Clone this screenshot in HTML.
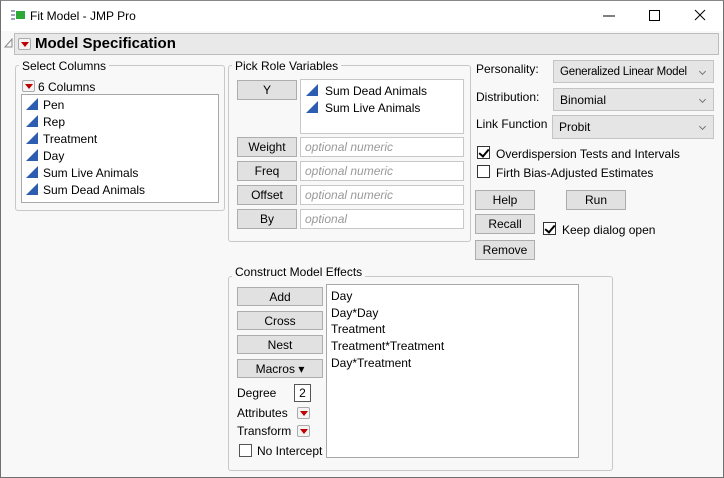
<!DOCTYPE html>
<html><head><style>
*{box-sizing:border-box;margin:0;padding:0}
body{width:724px;height:478px;overflow:hidden;background:#f8f8f8;font-family:"Liberation Sans",sans-serif;font-size:12px;color:#000;position:relative}
.a{position:absolute}
.win{left:0;top:0;width:724px;height:478px;border:1px solid #707070;border-top:1px solid #888}
.title{left:1px;top:1px;width:722px;height:30px;background:#fff}
.grp{position:absolute;border:1px solid #c8c8c8;border-radius:3px}
.leg{position:absolute;background:#f8f8f8;padding:0 3px;white-space:nowrap}
.box{position:absolute;background:#fff;border:1px solid #a8a8a8}
.btn{position:absolute;background:#e1e1e1;border:1px solid #adadad;text-align:center;line-height:18px}
.tb{position:absolute;background:#fff;border:1px solid #c8c8c8;color:#999;font-style:italic;padding-left:4px;line-height:19px}
.dd{position:absolute;background:#e5e5e5;border:1px solid #c4c4c4;padding-left:6px;line-height:23px;white-space:nowrap}
.dd:after{content:"";position:absolute;right:8px;top:8px;width:4px;height:4px;border-right:1px solid #777;border-bottom:1px solid #777;transform:rotate(45deg)}
.cb{position:absolute;width:13px;height:13px;background:#fff;border:1px solid #333}
.ck:after{content:"";position:absolute;left:3px;top:0px;width:4px;height:8px;border-right:2px solid #000;border-bottom:2px solid #000;transform:rotate(40deg)}
.ic{position:absolute;width:0;height:0;border-left:12px solid transparent;border-bottom:12px solid #2d5db0}
.rt{position:absolute;width:13px;height:12px;background:#f4f4f4;border:1px solid #aaa;border-radius:2px}
.rt:after{content:"";position:absolute;left:2px;top:3px;border-left:4px solid transparent;border-right:4px solid transparent;border-top:5px solid #c00000}
.t{position:absolute;white-space:nowrap}
</style></head><body>
<div class="a win"></div>
<div class="a title"></div>
<svg class="a" style="left:10px;top:9px" width="16" height="12"><path d="M1 2h4M1 6h4M1 10h4" stroke="#7a8aa0" stroke-width="1.5"/><rect x="6" y="2" width="9" height="8" fill="#2fa838"/></svg>
<div class="t" style="left:30px;top:9px;font-size:12px">Fit Model - JMP Pro</div>
<svg class="a" style="left:600px;top:6px" width="114" height="20"><path d="M3 10h12" stroke="#000"/><rect x="49.5" y="4.5" width="10" height="10" fill="none" stroke="#000"/><path d="M95 4l10 10M105 4l-10 10" stroke="#000"/></svg>
<svg class="a" style="left:4px;top:38px" width="10" height="10"><path d="M8 1v8H1z" fill="none" stroke="#888"/></svg>
<div class="a" style="left:14px;top:33px;width:705px;height:22px;background:#e9e9e9;border:1px solid #bdbdbd"></div>
<div class="rt" style="left:18px;top:38px"></div>
<div class="t" style="left:35px;top:35px;font-size:15px;font-weight:bold">Model Specification</div>

<div class="grp" style="left:15px;top:65px;width:210px;height:146px"></div>
<div class="leg" style="left:19px;top:59px">Select Columns</div>
<div class="rt" style="left:22px;top:80px"></div>
<div class="t" style="left:38px;top:80px">6 Columns</div>
<div class="box" style="left:21px;top:94px;width:198px;height:109px"></div>
<div class="ic" style="left:26px;top:98px"></div><div class="t" style="left:43px;top:98px">Pen</div>
<div class="ic" style="left:26px;top:115px"></div><div class="t" style="left:43px;top:115px">Rep</div>
<div class="ic" style="left:26px;top:132px"></div><div class="t" style="left:43px;top:132px">Treatment</div>
<div class="ic" style="left:26px;top:149px"></div><div class="t" style="left:43px;top:149px">Day</div>
<div class="ic" style="left:26px;top:166px"></div><div class="t" style="left:43px;top:166px">Sum Live Animals</div>
<div class="ic" style="left:26px;top:183px"></div><div class="t" style="left:43px;top:183px">Sum Dead Animals</div>

<div class="grp" style="left:228px;top:65px;width:243px;height:177px"></div>
<div class="leg" style="left:232px;top:59px">Pick Role Variables</div>
<div class="btn" style="left:237px;top:80px;width:60px;height:20px">Y</div>
<div class="box" style="left:300px;top:79px;width:164px;height:55px;border-color:#c8c8c8"></div>
<div class="ic" style="left:306px;top:84px"></div><div class="t" style="left:325px;top:84px">Sum Dead Animals</div>
<div class="ic" style="left:306px;top:101px"></div><div class="t" style="left:325px;top:101px">Sum Live Animals</div>
<div class="btn" style="left:237px;top:137px;width:60px;height:20px">Weight</div>
<div class="tb" style="left:300px;top:137px;width:164px;height:20px">optional numeric</div>
<div class="btn" style="left:237px;top:161px;width:60px;height:20px">Freq</div>
<div class="tb" style="left:300px;top:161px;width:164px;height:20px">optional numeric</div>
<div class="btn" style="left:237px;top:185px;width:60px;height:20px">Offset</div>
<div class="tb" style="left:300px;top:185px;width:164px;height:20px">optional numeric</div>
<div class="btn" style="left:237px;top:209px;width:60px;height:20px">By</div>
<div class="tb" style="left:300px;top:209px;width:164px;height:20px">optional</div>

<div class="t" style="left:476px;top:62px">Personality:</div>
<div class="dd" style="left:553px;top:60px;width:161px;height:23px;font-size:11.5px;letter-spacing:-0.2px">Generalized Linear Model</div>
<div class="t" style="left:476px;top:90px">Distribution:</div>
<div class="dd" style="left:553px;top:88px;width:161px;height:23px">Binomial</div>
<div class="t" style="left:476px;top:117px">Link Function</div>
<div class="dd" style="left:552px;top:115px;width:162px;height:24px">Probit</div>
<div class="cb ck" style="left:477px;top:146px"></div><div class="t" style="left:496px;top:147px">Overdispersion Tests and Intervals</div>
<div class="cb" style="left:477px;top:165px"></div><div class="t" style="left:496px;top:166px">Firth Bias-Adjusted Estimates</div>
<div class="btn" style="left:475px;top:190px;width:60px;height:20px">Help</div>
<div class="btn" style="left:566px;top:190px;width:60px;height:20px">Run</div>
<div class="btn" style="left:475px;top:214px;width:60px;height:20px">Recall</div>
<div class="cb ck" style="left:543px;top:222px"></div><div class="t" style="left:562px;top:223px">Keep dialog open</div>
<div class="btn" style="left:475px;top:240px;width:60px;height:20px">Remove</div>

<div class="grp" style="left:228px;top:276px;width:385px;height:195px"></div>
<div class="leg" style="left:232px;top:265px">Construct Model Effects</div>
<div class="btn" style="left:237px;top:287px;width:86px;height:19px">Add</div>
<div class="btn" style="left:237px;top:311px;width:86px;height:19px">Cross</div>
<div class="btn" style="left:237px;top:335px;width:86px;height:19px">Nest</div>
<div class="btn" style="left:237px;top:359px;width:86px;height:19px">Macros &#9662;</div>
<div class="box" style="left:326px;top:284px;width:253px;height:174px"></div>
<div class="t" style="left:331px;top:289px">Day</div>
<div class="t" style="left:331px;top:306px">Day*Day</div>
<div class="t" style="left:331px;top:322px">Treatment</div>
<div class="t" style="left:331px;top:339px">Treatment*Treatment</div>
<div class="t" style="left:331px;top:356px">Day*Treatment</div>
<div class="t" style="left:237px;top:386px">Degree</div>
<div class="box" style="left:294px;top:384px;width:17px;height:18px;border-color:#555;text-align:center;line-height:16px">2</div>
<div class="t" style="left:237px;top:406px">Attributes</div>
<div class="rt" style="left:297px;top:407px"></div>
<div class="t" style="left:237px;top:424px">Transform</div>
<div class="rt" style="left:297px;top:425px"></div>
<div class="cb" style="left:239px;top:444px;border-color:#555"></div>
<div class="t" style="left:257px;top:444px">No Intercept</div>
</body></html>
